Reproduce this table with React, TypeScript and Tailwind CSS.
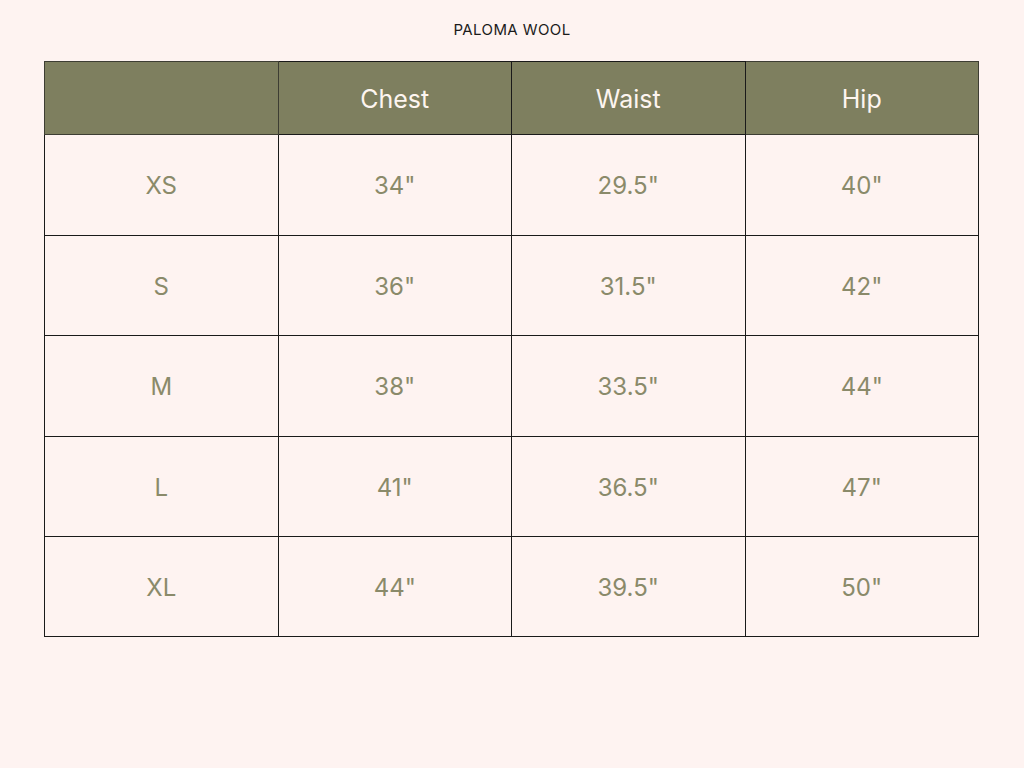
import React from "react";

const rows = [
  { size: "XS", chest: '34"', waist: '29.5"', hip: '40"', h: "h-[101px]" },
  { size: "S", chest: '36"', waist: '31.5"', hip: '42"', h: "h-[100px]" },
  { size: "M", chest: '38"', waist: '33.5"', hip: '44"', h: "h-[101px]" },
  { size: "L", chest: '41"', waist: '36.5"', hip: '47"', h: "h-[100px]" },
  { size: "XL", chest: '44"', waist: '39.5"', hip: '50"', h: "h-[100px]" },
];

export default function App() {
  return (
    <div className="w-[1024px] h-[768px] bg-[#fef3f1] font-['Inter','Liberation_Sans',sans-serif]">
      <div className="pt-[21px] text-center text-[15px] leading-[18px] text-[#1b1b1b] tracking-[0.4px]">
        PALOMA WOOL
      </div>
      <div className="pl-[44px] pt-[22px]">
        <table className="w-[935px] border-collapse table-fixed">
          <thead>
            <tr className="h-[73px] bg-[#7e7f5f] text-[#fdf5f0]">
              <th className="border border-[#3d3d33] font-normal"></th>
              <th className="border border-[#1a1a1a] font-normal text-[25px] pt-[3px]">Chest</th>
              <th className="border border-[#1a1a1a] font-normal text-[25px] pt-[3px]">Waist</th>
              <th className="border border-[#3d3d33] font-normal text-[25px] pt-[3px]">Hip</th>
            </tr>
          </thead>
          <tbody>
            {rows.map((r) => (
              <tr key={r.size} className={`${r.h} text-[24px] text-[#8a8a6a]`}>
                <td className="border border-[#1a1a1a] text-center pt-[2px]">{r.size}</td>
                <td className="border border-[#1a1a1a] text-center pt-[2px]">{r.chest}</td>
                <td className="border border-[#1a1a1a] text-center pt-[2px]">{r.waist}</td>
                <td className="border border-[#1a1a1a] text-center pt-[2px]">{r.hip}</td>
              </tr>
            ))}
          </tbody>
        </table>
      </div>
    </div>
  );
}
